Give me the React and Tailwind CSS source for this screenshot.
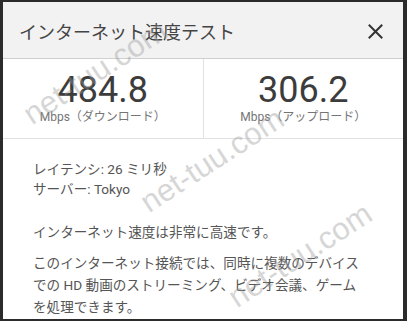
export default function App() {
  const font = { fontFamily: 'Roboto, "Noto Sans CJK JP", sans-serif' };
  const marks = [
    { l: 95, t: 72 },
    { l: 212, t: 160 },
    { l: 300, t: 255 },
  ];
  return (
    <div className="w-[407px] h-[321px] bg-[#2b2b2b] pl-[3px] pt-[2px] pr-[4px] pb-[2px]" style={font}>
      <div className="relative w-full h-full bg-white flex flex-col overflow-hidden">
        <div className="h-[57px] shrink-0 bg-[#f2f2f2] border-b border-[#cfcfcf] flex items-center justify-between pl-[16px] pr-[20px] pt-[5px]">
          <div className="text-[18px] text-[#444] leading-none">インターネット速度テスト</div>
          <svg width="15" height="15" viewBox="0 0 15 15" className="-mt-[3px]">
            <path d="M1.5 1.5 L13.5 13.5 M13.5 1.5 L1.5 13.5" stroke="#333" strokeWidth="2" strokeLinecap="square" />
          </svg>
        </div>
        <div className="h-[80px] shrink-0 flex border-b border-[#e2e2e2]">
          <div className="flex-1 flex flex-col items-center pt-[13px] border-r border-[#e2e2e2]">
            <div className="text-[36px] leading-[36px] text-[#3c3c3c]">484.8</div>
            <div className="mt-[1px] text-[12px] leading-[16px] text-[#757575]">Mbps（ダウンロード）</div>
          </div>
          <div className="flex-1 flex flex-col items-center pt-[13px]">
            <div className="text-[36px] leading-[36px] text-[#3c3c3c]">306.2</div>
            <div className="mt-[1px] text-[12px] leading-[16px] text-[#757575]">Mbps（アップロード）</div>
          </div>
        </div>
        <div className="pl-[30px] pr-[36px] pt-[20px] text-[13.6px] text-[#555]">
          <div className="leading-[20px]">レイテンシ: 26 ミリ秒</div>
          <div className="leading-[20px]">サーバー: Tokyo</div>
          <p className="mt-[22px] leading-[22px]">インターネット速度は非常に高速です。</p>
          <p className="mt-[9px] leading-[22px]">
            このインターネット接続では、同時に複数のデバイスでの HD 動画のストリーミング、ビデオ会議、ゲームを処理できます。
          </p>
        </div>
        {marks.map((m, i) => (
          <div
            key={i}
            className="absolute pointer-events-none whitespace-nowrap text-[31px] leading-none text-[#9a9a9a] opacity-40"
            style={{
              left: m.l - 3,
              top: m.t - 2,
              transform: 'translate(-50%, -50%) rotate(-33deg)',
              fontFamily: '"Liberation Sans", Arial, sans-serif',
            }}
          >
            net-tuu.com
          </div>
        ))}
      </div>
    </div>
  );
}
